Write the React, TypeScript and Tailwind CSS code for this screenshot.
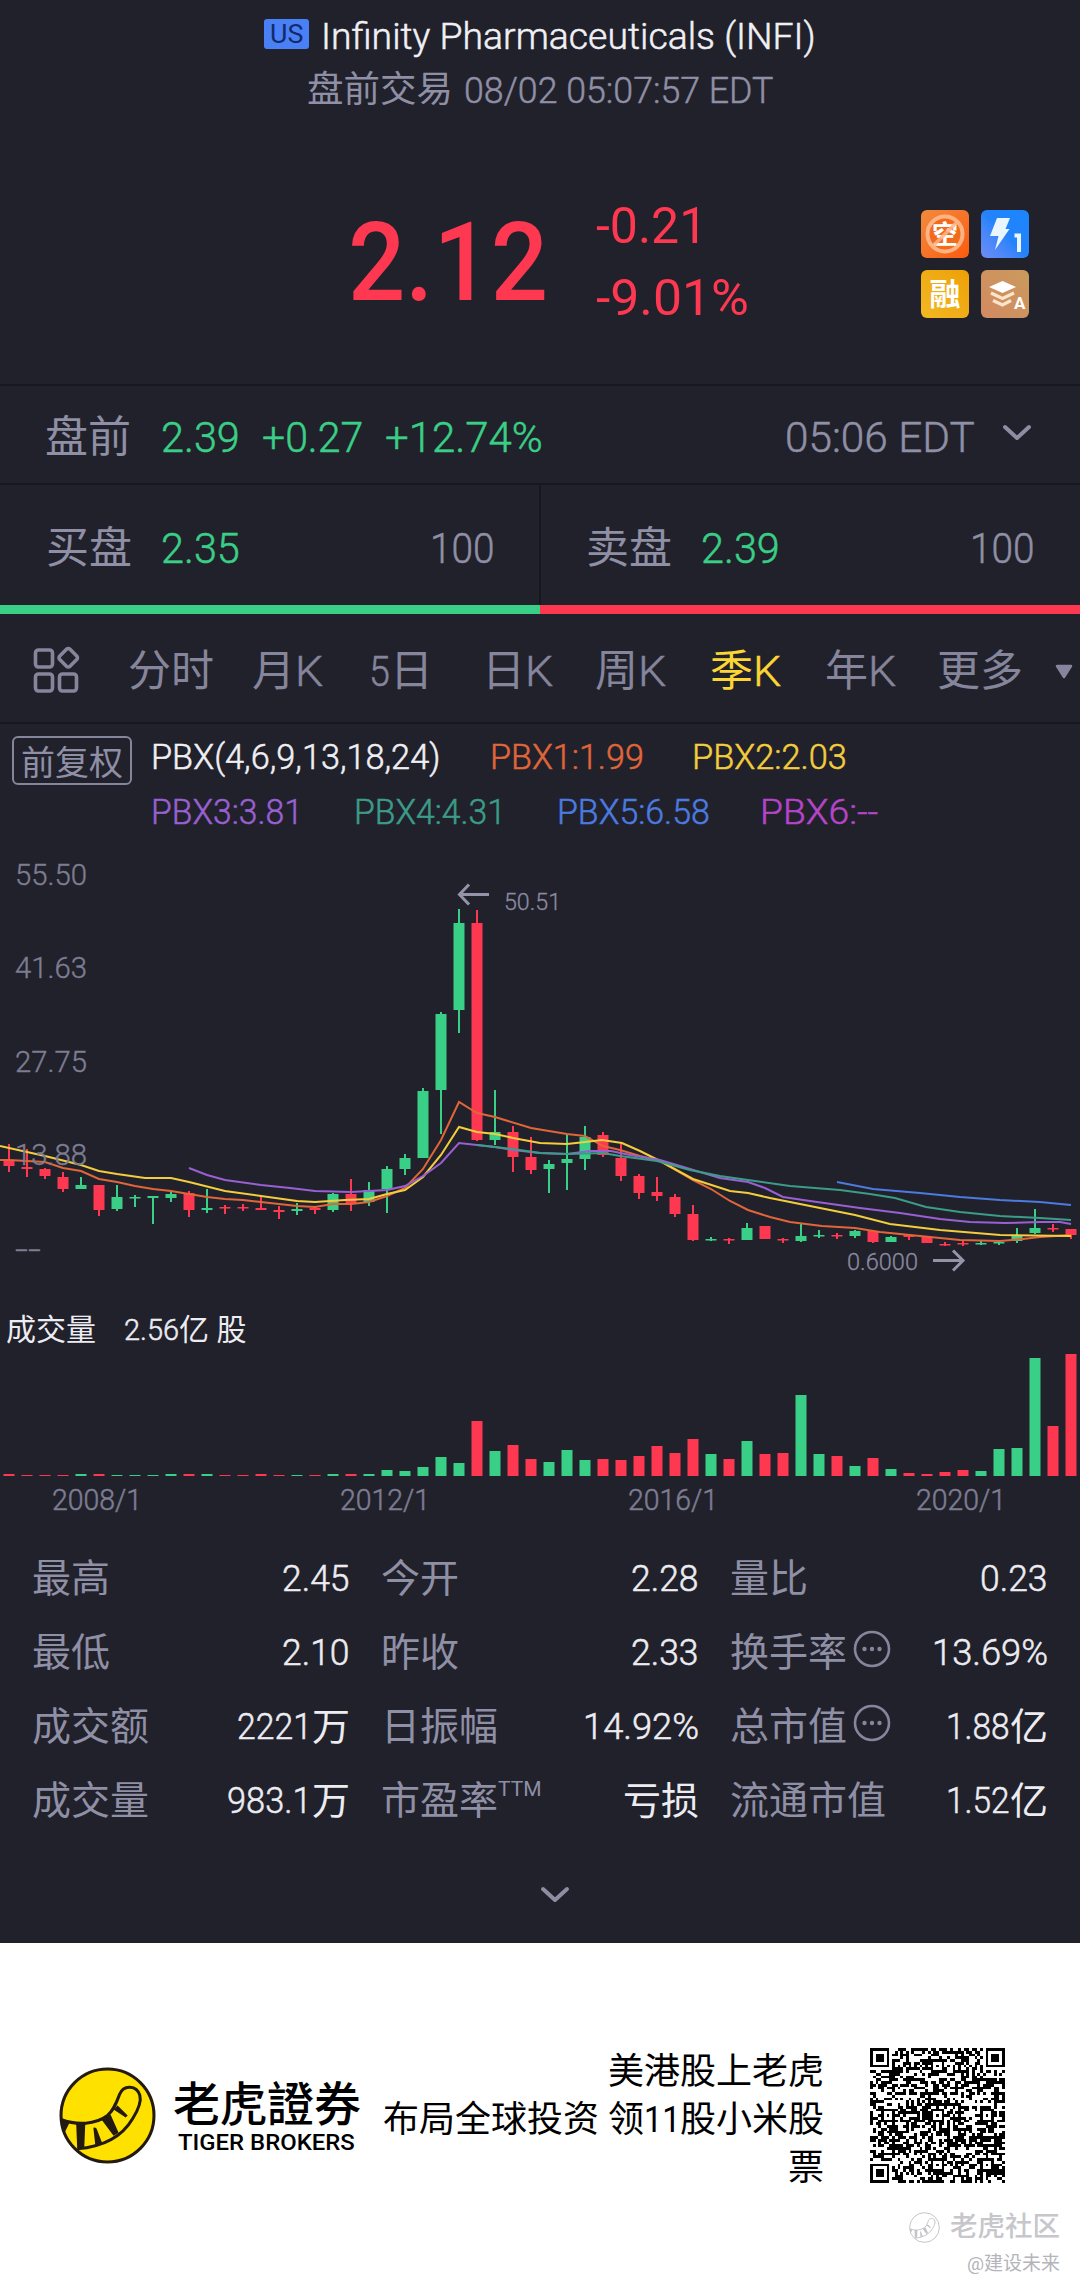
import React, {useLayoutEffect, useRef, useState} from 'react';

const GREEN = '#3acf86';
const RED = '#fe3850';

type FitProps = { w: number; weight?: string; className?: string; children: React.ReactNode };

// Squeezes a line of text into a fixed width, for the narrow DIN look
const Fit = ({w, weight = 'font-light [-webkit-text-stroke:0.5px]', className = '', children}: FitProps) => {
    const ref = useRef<HTMLSpanElement>(null);
    const [scale, setScale] = useState(1);

    useLayoutEffect(() => {
        if (ref.current) setScale(w / ref.current.offsetWidth);
    }, [w]);

    return (
        <span className={`block shrink-0 leading-none ${weight} ${className}`} style={{width: w}}>
            <span
                ref={ref}
                className="inline-block origin-left whitespace-nowrap"
                style={{transform: `scaleX(${scale})`}}
            >
                {children}
            </span>
        </span>
    );
};

// [up, high, body top, body bottom, low, volume height]
const candles: [number, number, number, number, number, number][] = [
    [0, 1144, 1160, 1166, 1172, 2], [0, 1149, 1167, 1169, 1177, 1], [0, 1168, 1169, 1176, 1179, 1],
    [0, 1172, 1177, 1189, 1192, 1], [1, 1177, 1185, 1189, 1189, 2], [0, 1185, 1185, 1210, 1216, 2],
    [1, 1185, 1197, 1209, 1211, 1], [1, 1195, 1197, 1198, 1207, 1], [1, 1196, 1196, 1198, 1224, 1],
    [1, 1191, 1194, 1198, 1202, 2], [0, 1191, 1193, 1210, 1217, 2], [1, 1189, 1208, 1210, 1213, 2],
    [0, 1205, 1207, 1208, 1214, 1], [0, 1204, 1207, 1208, 1211, 1], [0, 1196, 1208, 1210, 1210, 2],
    [0, 1206, 1210, 1212, 1219, 1], [1, 1203, 1209, 1211, 1215, 1], [0, 1207, 1208, 1210, 1214, 1],
    [1, 1193, 1194, 1210, 1212, 2], [0, 1179, 1194, 1203, 1211, 2], [1, 1182, 1190, 1202, 1206, 2],
    [1, 1166, 1169, 1189, 1213, 6], [1, 1154, 1158, 1169, 1175, 5], [1, 1088, 1091, 1158, 1158, 9],
    [1, 1012, 1014, 1090, 1134, 19], [1, 909, 923, 1010, 1033, 13], [0, 910, 923, 1140, 1141, 55],
    [1, 1090, 1132, 1140, 1145, 25], [0, 1126, 1132, 1157, 1172, 31], [0, 1137, 1157, 1170, 1174, 17],
    [1, 1160, 1164, 1169, 1193, 14], [1, 1134, 1159, 1163, 1190, 26], [1, 1126, 1137, 1159, 1170, 16],
    [0, 1132, 1135, 1155, 1157, 17], [0, 1143, 1158, 1176, 1181, 16], [0, 1174, 1176, 1193, 1199, 20],
    [0, 1177, 1192, 1196, 1201, 30], [0, 1194, 1197, 1214, 1217, 23], [0, 1205, 1214, 1240, 1241, 37],
    [1, 1237, 1239, 1240, 1241, 22], [0, 1238, 1239, 1240, 1244, 17], [1, 1223, 1228, 1240, 1240, 35],
    [0, 1226, 1226, 1239, 1239, 22], [0, 1238, 1239, 1240, 1243, 23], [1, 1224, 1236, 1241, 1242, 81],
    [1, 1230, 1235, 1236, 1238, 22], [0, 1233, 1235, 1236, 1239, 20], [1, 1230, 1231, 1236, 1238, 10],
    [0, 1230, 1231, 1242, 1243, 18], [1, 1236, 1237, 1242, 1242, 7], [0, 1234, 1235, 1237, 1240, 3],
    [0, 1237, 1237, 1243, 1243, 2], [0, 1242, 1244, 1245, 1246, 4], [0, 1240, 1243, 1244, 1246, 6],
    [1, 1241, 1243, 1244, 1245, 5], [1, 1240, 1242, 1243, 1245, 27], [1, 1228, 1236, 1241, 1243, 28],
    [1, 1209, 1228, 1233, 1234, 118], [0, 1224, 1228, 1229, 1232, 50], [0, 1229, 1229, 1235, 1239, 122],
];

const averages = [
    ['#e0663a', '0,1160 9,1160 27,1161 45,1162 63,1168 81,1171 99,1179 117,1182 135,1186 153,1189 171,1191 189,1194 207,1197 225,1199 243,1200 261,1202 279,1204 297,1206 315,1207 333,1204 351,1204 369,1202 387,1196 405,1188 423,1169 441,1140 459,1102 477,1113 495,1117 531,1128 567,1134 585,1136 603,1146 620,1150 640,1156 660,1161 672,1168 693,1180 711,1189 730,1201 748,1210 770,1217 790,1222 822,1226 855,1228 880,1232 920,1236 960,1240 1000,1241 1023,1239 1040,1237 1071,1235'],
    ['#f3cd3d', '0,1146 27,1152 45,1156 81,1165 99,1171 117,1174 145,1178 171,1178 189,1182 225,1191 261,1196 297,1201 315,1202 345,1200 369,1199 387,1194 405,1190 423,1177 441,1155 459,1127 477,1132 495,1134 513,1138 540,1143 567,1144 585,1142 602,1140 622,1143 640,1151 660,1161 693,1179 730,1191 748,1193 770,1198 800,1204 830,1210 855,1215 890,1224 940,1230 1000,1235 1071,1236'],
    ['#9860d2', '189,1168 207,1175 225,1180 261,1185 290,1188 315,1191 351,1192 369,1191 387,1190 405,1186 423,1176 441,1163 459,1143 477,1145 495,1147 513,1150 540,1153 567,1154 590,1151 611,1151 630,1155 660,1160 690,1169 720,1178 748,1182 765,1188 783,1197 810,1201 860,1208 900,1213 940,1219 970,1222 1005,1223 1040,1222 1060,1222 1071,1224'],
    ['#3b9c88', '477,1145 495,1147 513,1149 540,1153 567,1154 603,1153 620,1156 657,1161 690,1170 720,1176 748,1180 790,1186 840,1190 870,1194 895,1198 926,1207 960,1212 1000,1216 1040,1218 1071,1220'],
    ['#4c7be0', '837,1182 873,1189 920,1193 960,1197 1000,1200 1040,1202 1071,1205'],
];

const PriceChart = () => (
    <svg className="block" width="1080" height="455" viewBox="0 845 1080 455">
        {candles.map(([up, high, top, bottom, low], i) => (
            <g key={i} fill={up ? GREEN : RED}>
                <rect x={8 + i * 18} y={high} width="2" height={low - high}/>
                <rect x={3.5 + i * 18} y={top} width="11" height={Math.max(bottom - top, 1.5)}/>
            </g>
        ))}
        {averages.map(([color, points]) => (
            <polyline key={color} points={points} fill="none" stroke={color} strokeWidth="2"/>
        ))}
        <g fill="#7d7d92" stroke="#7d7d92" strokeWidth="0.4" fontSize="30" fontWeight="300">
            <text x="15" y="884.5" textLength="72" lengthAdjust="spacingAndGlyphs">55.50</text>
            <text x="15" y="978" textLength="72" lengthAdjust="spacingAndGlyphs">41.63</text>
            <text x="15" y="1071.5" textLength="72" lengthAdjust="spacingAndGlyphs">27.75</text>
            <text x="15" y="1164.5" textLength="72" lengthAdjust="spacingAndGlyphs">13.88</text>
            <text x="15" y="1260" textLength="26" lengthAdjust="spacingAndGlyphs">--</text>
        </g>
        <g fill="#8b8ba0" stroke="#8b8ba0" strokeWidth="0.3" fontSize="24.5" fontWeight="300">
            <text x="504" y="910" textLength="57" lengthAdjust="spacingAndGlyphs">50.51</text>
            <text x="847" y="1270" textLength="71" lengthAdjust="spacingAndGlyphs">0.6000</text>
        </g>
        <g fill="none" stroke="#9494a9" strokeWidth="3">
            <path d="M489 894.5H460M469 884.5L459.5 894.5L469 904.5"/>
            <path d="M933 1260.5H962M953 1250.5L963 1260.5L953 1270.5"/>
        </g>
    </svg>
);

const VolumeChart = () => (
    <svg className="block" width="1080" height="130" viewBox="0 0 1080 130">
        {candles.map(([up, , , , , v], i) => (
            <rect key={i} x={3.5 + i * 18} y={126 - v} width="11" height={v} fill={up ? GREEN : RED}/>
        ))}
    </svg>
);

const Chevron = () => (
    <svg width="30" height="18" viewBox="0 0 30 18" fill="none" stroke="#8d8da3" strokeWidth="4"
         strokeLinecap="round" strokeLinejoin="round">
        <path d="M3 3L15 14L27 3"/>
    </svg>
);

const GridIcon = () => (
    <svg className="-mt-1" width="48" height="48" viewBox="0 0 48 48" fill="none" stroke="#85859b" strokeWidth="3.6">
        <rect x="3.5" y="4" width="17" height="17" rx="3"/>
        <rect x="3.5" y="28" width="17" height="17" rx="3"/>
        <rect x="27.5" y="28" width="17" height="17" rx="3"/>
        <rect x="29" y="4.500" width="14.500" height="14.500" rx="2.500" transform="rotate(45 36.25 11.75)"/>
    </svg>
);

const MoreIcon = () => (
    <svg className="mb-2 ml-[6px]" width="38" height="38" viewBox="0 0 38 38" fill="none" stroke="#85859b" strokeWidth="2.6">
        <circle cx="19" cy="19" r="17"/>
        <g fill="#85859b" stroke="none">
            <circle cx="11.5" cy="19" r="2.2"/>
            <circle cx="19" cy="19" r="2.2"/>
            <circle cx="26.5" cy="19" r="2.2"/>
        </g>
    </svg>
);

const Tags = () => (
    <div className="grid grid-cols-[48px_48px] gap-3 text-white">
        <div className="h-12 rounded-md bg-linear-to-br from-[#f08a3c] to-[#fb5a08]">
            <svg width="48" height="48" viewBox="0 0 48 48">
                <circle cx="24" cy="24" r="17.5" fill="#f26a1c" stroke="#ffb383" strokeWidth="4"/>
                <text x="24" y="33.5" textAnchor="middle" fontSize="26" fontWeight="700" fill="#fff">空</text>
                <path d="M12 36L36 12" stroke="#ffb488" strokeWidth="3.5" opacity="0.85"/>
            </svg>
        </div>
        <div className="h-12 rounded-md bg-linear-to-tr from-[#6d8df5] via-[#2383fb] to-[#1a86ff]">
            <svg width="48" height="48" viewBox="0 0 48 48">
                <path d="M16 8H29L24.5 19H28.5L14 40L17.5 26H9Z" fill="#e9f5ff"/>
                <path d="M33.5 25.5H38V42" fill="none" stroke="#e9f5ff" strokeWidth="4"/>
            </svg>
        </div>
        <div className="flex h-12 items-center justify-center rounded-md bg-linear-to-tr from-[#f2b822] to-[#eea004] text-[31px] leading-none font-bold">
            <span>融</span>
        </div>
        <div className="h-12 rounded-md bg-linear-to-tr from-[#d38a62] to-[#c99a5c]">
            <svg width="48" height="48" viewBox="0 0 48 48" fill="none" stroke="#fbe5cb" strokeWidth="3.2">
                <path d="M8 17L21.5 11L35 17L21.5 23Z" fill="#fff" stroke="none"/>
                <path d="M10 23L21.5 28.5L33 23M12 30.5L21.5 35L30 30.5"/>
                <text x="33" y="39" fontSize="17" fontWeight="700" fill="#fff" stroke="none">A</text>
            </svg>
        </div>
    </div>
);

const TigerTail = ({size, mono = false}: { size: number; mono?: boolean }) => {
    const ink = mono ? '#c3c3c8' : '#231a10';
    return (
        <svg className="shrink-0" width={size} height={size} viewBox="0 0 96 96">
            <circle cx="48" cy="48" r="46" fill={mono ? '#fff' : '#ffe100'} stroke={ink} strokeWidth="3"/>
            <path
                d="M2 52C18 58 36 57 48 48C54 43 57 35 60 27C64 17 77 18 80 28C82 35 78 43 73 51C63 68 44 79 18 81"
                fill="none" stroke={ink} strokeWidth="3"/>
            <path
                d="M2 51L11 54L5 66ZM17 56L26 56L25 80L18 80ZM34 60Q37 59 38 63L43 76L36 78ZM42 52L51 47L59 65L54 68ZM54 42L58 38L68 48L66 50Z"
                fill={ink}/>
        </svg>
    );
};

const N = 49;

// Version 8 symbol: finders, alignment marks and a fixed data pattern
const qrModules = () => {
    const grid: boolean[][] = [];
    let seed = 20210802;
    for (let y = 0; y < N; y++) {
        grid.push([]);
        for (let x = 0; x < N; x++) {
            seed = (seed * 1103515245 + 12345) % 2147483648;
            grid[y].push(seed / 2147483648 > 0.47);
        }
    }
    for (let i = 8; i < N - 8; i++) grid[6][i] = grid[i][6] = i % 2 === 0;
    const mark = (cx: number, cy: number, r: number, rings: number[]) => {
        for (let y = -r; y <= r; y++) {
            for (let x = -r; x <= r; x++) {
                if (grid[cy + y]?.[cx + x] === undefined) continue;
                grid[cy + y][cx + x] = rings.includes(Math.max(Math.abs(x), Math.abs(y)));
            }
        }
    };
    [[3, 3], [N - 4, 3], [3, N - 4]].forEach(([x, y]) => mark(x, y, 4, [0, 1, 3]));
    [[24, 6], [6, 24], [24, 24], [42, 24], [24, 42], [42, 42]].forEach(([x, y]) => mark(x, y, 2, [0, 2]));
    return grid;
};

const QrCode = () => (
    <svg width="135" height="135" viewBox={`0 0 ${N} ${N}`} shapeRendering="crispEdges">
        <path d={qrModules().flatMap((row, y) => row.map((on, x) => (on ? `M${x} ${y}h1v1h-1z` : ''))).join('')}/>
    </svg>
);

const tabs: [string, string, string, string][] = [
    ['', '分时', '', 'w-[84px] ml-[48px]'],
    ['', '月', 'K', 'w-[68px] ml-[40px]'],
    ['5', '日', '', 'w-[62px] ml-[49px]'],
    ['', '日', 'K', 'w-[68px] ml-[51px]'],
    ['', '周', 'K', 'w-[70px] ml-[45px]'],
    ['', '季', 'K', 'w-[70px] ml-[45px] text-[#fbd634]'],
    ['', '年', 'K', 'w-[70px] ml-[45px]'],
    ['', '更多', '', 'w-[84px] ml-[42px]'],
];

const stats: [string, string, number][][] = [
    [['最高', '2.45', 68], ['今开', '2.28', 68], ['量比', '0.23', 68]],
    [['最低', '2.10', 68], ['昨收', '2.33', 68], ['换手率', '13.69%', 116]],
    [['成交额', '2221万', 75], ['日振幅', '14.92%', 116], ['总市值', '1.88亿', 64]],
    [['成交量', '983.1万', 85], ['市盈率', '亏损', 0], ['流通市值', '1.52亿', 64]],
];

const StatValue = ({value, w}: { value: string; w: number }) => {
    const digits = value.replace(/[^\d.%]/g, '');
    return (
        <span className="ml-auto flex items-center text-[38px] text-[#ececf1]">
            {digits && <Fit w={w} className="text-[36px]">{digits}</Fit>}
            {value.slice(digits.length)}
        </span>
    );
};

const App = () => (
    <div className="h-[2288px] w-[1080px] overflow-hidden bg-[#21212b] font-['Roboto','Noto_Sans_CJK_SC',sans-serif] font-normal text-[#8f8fa5]">
        <header className="h-[384px]">
            <div className="flex h-[57px] items-center justify-center gap-3 pt-[15px]">
                <span className="-mt-[5px] flex h-[30px] w-[45px] items-center justify-center rounded-[3px] bg-[#4a80f6] text-[#122a6b]">
                    <Fit w={33} weight="font-normal" className="text-[26px]">US</Fit>
                </span>
                <Fit w={495} className="text-[37px] text-[#f0f0f4]">Infinity Pharmaceuticals (INFI)</Fit>
            </div>
            <div className="flex h-[66px] items-center justify-center gap-[11px] pt-px text-[36.5px] leading-none">
                <span>盘前交易</span>
                <Fit w={309} className="text-[37px]">08/02 05:07:57 EDT</Fit>
            </div>
            <div className="mt-[66px] flex h-[144px] items-center pl-[348px] text-[#fe3850]">
                <Fit w={200} weight="font-medium" className="mt-[3px] text-[110px]">2.12</Fit>
                <div className="mt-[2px] ml-[48px] w-[325px]">
                    <div className="flex h-[72px] items-center">
                        <Fit w={111} weight="font-normal" className="text-[50px]">-0.21</Fit>
                    </div>
                    <div className="flex h-[72px] items-center">
                        <Fit w={153} weight="font-normal" className="text-[50px]">-9.01%</Fit>
                    </div>
                </div>
                <div className="mt-[6px]">
                    <Tags/>
                </div>
            </div>
        </header>

        <section className="flex h-[99px] items-center border-t-2 border-[#171720] pt-[5px] pl-[45px] text-[43px] leading-none">
            <span>盘前</span>
            <div className="ml-[30px] flex gap-[22px] text-[#3acf86]">
                <Fit w={79}>2.39</Fit>
                <Fit w={101}>+0.27</Fit>
                <Fit w={158}>+12.74%</Fit>
            </div>
            <Fit w={190} className="ml-auto">05:06 EDT</Fit>
            <span className="mr-[48px] ml-[27px] -mt-2"><Chevron/></span>
        </section>

        <section className="flex border-t-2 border-[#171720] text-[43px] leading-none">
            {[['买盘', '2.35'], ['卖盘', '2.39']].map(([side, price], i) => (
                <div
                    key={side}
                    className={`flex h-[129px] w-[540px] items-center border-b-9 pr-[45px] pl-[46px] ${
                        i === 0 ? 'border-[#3acf86]' : 'border-[#fe3850]'
                    }`}
                >
                    <span className="mt-[6px]">{side}</span>
                    <Fit w={79} className="mt-[7px] ml-[29px] text-[#3acf86]">{price}</Fit>
                    <Fit w={65} className="mt-[7px] ml-auto">100</Fit>
                    {i === 0 && <span className="-mr-[46px] ml-[44px] h-full w-[2px] bg-[#171720]"/>}
                </div>
            ))}
        </section>

        <nav className="flex h-[110px] items-center border-b-2 border-[#171720] pt-[7px] pl-[32px] text-[43px] leading-none whitespace-nowrap text-[#85859b]">
            <GridIcon/>
            {tabs.map(([pre, name, post, cls]) => (
                <span key={name + post + pre} className={`flex shrink-0 items-center ${cls}`}>
                    {pre && <Fit w={21}>{pre}</Fit>}
                    <span>{name}</span>
                    {post && <Fit w={28}>{post}</Fit>}
                </span>
            ))}
            <svg className="ml-[34px]" width="18" height="16" viewBox="0 0 18 16">
                <path d="M2 2H16L9 13Z" fill="#85859b" stroke="#85859b" strokeWidth="2.5" strokeLinejoin="round"/>
            </svg>
        </nav>

        <section className="flex h-[121px] pt-[12px] pl-[12px]">
            <span className="flex h-[49px] w-[120px] items-center justify-center rounded-md border-2 border-[#85859b] pt-[4px] text-[34px] leading-none whitespace-nowrap">
                前复权
            </span>
            <div className="ml-[19px] text-[35px]">
                <div className="flex h-[42px] items-center">
                    <Fit w={289} className="text-[#f0f0f4]">PBX(4,6,9,13,18,24)</Fit>
                    <Fit w={154} className="ml-[50px] text-[#e0663a]">PBX1:1.99</Fit>
                    <Fit w={155} className="ml-[48px] text-[#f3cd3d]">PBX2:2.03</Fit>
                </div>
                <div className="mt-[13px] flex h-[42px] items-center gap-[51px]">
                    <Fit w={152} className="text-[#9860d2]">PBX3:3.81</Fit>
                    <Fit w={152} className="text-[#3b9c88]">PBX4:4.31</Fit>
                    <Fit w={153} className="text-[#4c7be0]">PBX5:6.58</Fit>
                    <Fit w={118} className="-ml-px text-[#b545c8]">PBX6:--</Fit>
                </div>
            </div>
        </section>

        <PriceChart/>

        <div className="flex h-[50px] items-center pt-[10px] pl-[6px] text-[30px] leading-none text-[#ececf1]">
            <span>成交量</span>
            <Fit w={55} className="ml-[28px]">2.56</Fit>
            <span>亿 股</span>
        </div>
        <VolumeChart/>
        <div className="flex h-[40px] items-center gap-[198px] pl-[52px] text-[30px] text-[#7d7d92]">
            {['2008/1', '2012/1', '2016/1', '2020/1'].map((date) => (
                <Fit key={date} w={90}>{date}</Fit>
            ))}
        </div>

        <section className="pt-[22px] pr-[32px] pl-[32px] text-[39px] leading-none">
            {stats.map((row) => (
                <div key={row[0][0]} className="grid h-[74px] grid-cols-[318px_318px_318px] gap-x-[31px]">
                    {row.map(([label, value, w]) => (
                        <div key={label} className="flex items-center whitespace-nowrap">
                            <span>{label}</span>
                            {label === '市盈率' && <span className="mb-6 text-[21px]">TTM</span>}
                            {(label === '换手率' || label === '总市值') && <MoreIcon/>}
                            <StatValue value={value} w={w}/>
                        </div>
                    ))}
                </div>
            ))}
        </section>
        <div className="flex h-[105px] items-center justify-center pt-[9px] pl-[29px]">
            <Chevron/>
        </div>

        <footer className="h-[345px] bg-white text-black">
            <div className="flex h-[270px] items-start pl-[59px]">
                <div className="mt-[124px]"><TigerTail size={97}/></div>
                <div className="mt-[127px] ml-[17px] w-[191px]">
                    <div className="font-['Noto_Sans_CJK_TC'] text-[47px] leading-[62px] font-medium">老虎證券</div>
                    <Fit w={177} weight="font-medium" className="ml-[5px] text-[22px]">TIGER BROKERS</Fit>
                </div>
                <div className="mt-[105px] ml-[10px] w-[450px] text-right text-[36px] leading-[48px]">
                    <p>美港股上老虎</p>
                    <p className="flex items-center justify-end">
                        布局全球投资<span className="w-[9px]"/>领
                        <Fit w={36} weight="font-normal">11</Fit>
                        股小米股
                    </p>
                    <p>票</p>
                </div>
                <div className="mt-[105px] ml-[46px]"><QrCode/></div>
            </div>
            <div className="flex h-[28px] items-center justify-end gap-[10px] pr-[20px] text-[27.5px] leading-none font-medium text-[#c6c6cb]">
                <TigerTail size={31} mono/>
                <span>老虎社区</span>
            </div>
            <div className="mt-[12px] pr-[20px] text-right text-[19px] leading-[22px] text-[#b4b4ba]">@建设未来</div>
        </footer>
    </div>
);

export default App;
